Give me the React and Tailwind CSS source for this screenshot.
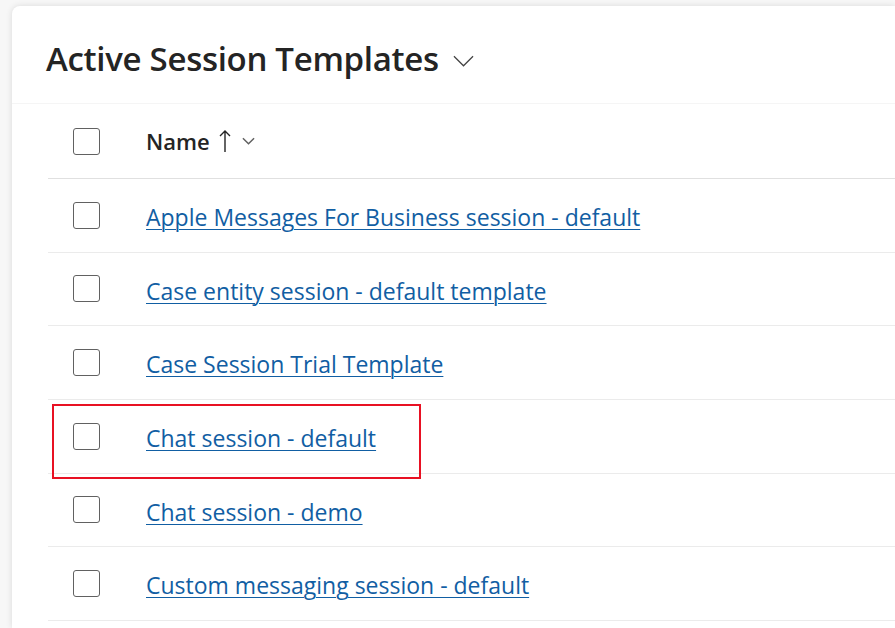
const rows = [
  'Apple Messages For Business session - default',
  'Case entity session - default template',
  'Case Session Trial Template',
  'Chat session - default',
  'Chat session - demo',
  'Custom messaging session - default',
];

function Checkbox() {
  return <div className="w-[27px] h-[27px] rounded-[3px] border border-[#616161] bg-white shrink-0" />;
}

export default function App() {
  return (
    <div className="h-[628px] overflow-hidden bg-[#f7f7f7] pl-3 pt-1.5" style={{ fontFamily: '"Open Sans", "Noto Sans", sans-serif' }}>
      <div className="h-full bg-white rounded-tl-lg shadow-[0_0_6px_rgba(0,0,0,0.12)]">
        {/* Header */}
        <div className="h-[98px] flex items-center pl-[34px] pt-2 border-b border-[#f5f5f5]">
          <h1 className="text-[33px] font-semibold text-[#242424] tracking-[-0.3px]">Active Session Templates</h1>
          <svg viewBox="0 0 22 12" className="w-[21px] h-[12px] ml-[14px] mt-1 text-[#424242]" fill="none" stroke="currentColor" strokeWidth="1.3">
            <path d="M1 1l10 10 10-10" />
          </svg>
        </div>

        {/* Table */}
        <div className="pl-[36px]">
          <div className="h-[75px] flex items-center border-b border-[#e0e0e0]">
            <div className="w-[98px] pl-[25px] flex items-center"><Checkbox /></div>
            <span className="text-[22px] font-semibold text-[#242424]">Name</span>
            <svg viewBox="0 0 12 24" className="w-[12px] h-[24px] ml-[9px] text-[#242424]" fill="none" stroke="currentColor" strokeWidth="1.4">
              <path d="M6 2v21M1 7l5-5 5 5" />
            </svg>
            <svg viewBox="0 0 14 8" className="w-[13px] h-[8px] ml-[11px] text-[#616161]" fill="none" stroke="currentColor" strokeWidth="1.6">
              <path d="M1 1l6 6 6-6" />
            </svg>
          </div>
          {rows.map((name, i) => (
            <div key={name} className="relative h-[73.67px] flex items-center border-b border-[#ebebeb]">
              <div className="w-[98px] pl-[25px] flex items-center"><Checkbox /></div>
              <a href="#" className="text-[23px] text-[#115ea3] underline underline-offset-[3px] decoration-1 pt-1">{name}</a>
              {i === 3 && <div className="absolute left-[4px] top-[4px] w-[369px] h-[75px] border-2 border-[#e81123]" />}
            </div>
          ))}
        </div>
      </div>
    </div>
  );
}
